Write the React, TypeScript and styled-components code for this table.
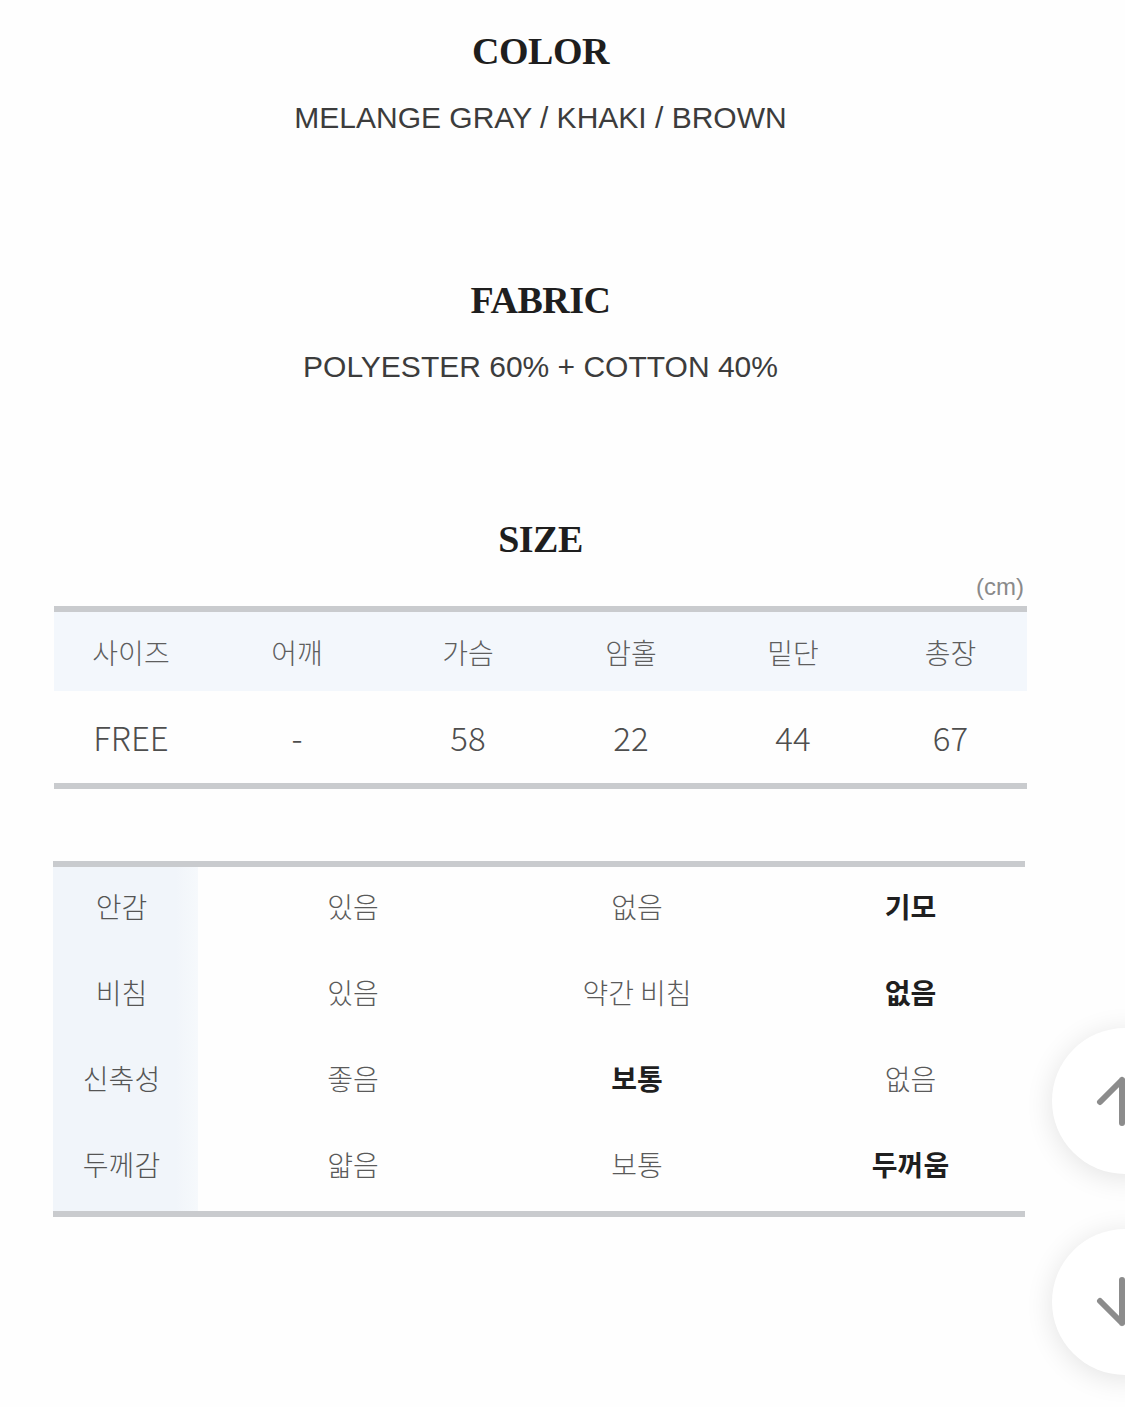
import React from 'react';
import styled, { createGlobalStyle } from 'styled-components';

const GlobalStyle = createGlobalStyle`
    html, body {
        margin: 0;
        padding: 0;
        background: #fefefe;
    }
    body {
        width: 1125px;
        height: 1407px;
        overflow: hidden;
    }
`;

const Page = styled.div`
    position: relative;
    width: 1125px;
    height: 1407px;
    padding: 29px 0 0 54px;
    box-sizing: border-box;
    overflow: hidden;
`;

const Content = styled.div`
    width: 973px;
    display: flex;
    flex-direction: column;
`;

const Title = styled.h2<{ $gap?: number }>`
    margin: ${(p) => p.$gap || 0}px 0 0;
    font-family: 'Liberation Serif', serif;
    font-weight: 700;
    font-size: 38px;
    line-height: 44px;
    letter-spacing: -0.5px;
    color: #1e1e1e;
    text-align: center;
`;

const Detail = styled.div`
    margin-top: 27px;
    font-family: 'Liberation Sans', sans-serif;
    font-size: 30px;
    line-height: 36px;
    color: #3c3c3c;
    text-align: center;
`;

const Unit = styled.div`
    margin-top: 12px;
    padding-right: 3px;
    font-family: 'Liberation Sans', sans-serif;
    font-size: 24px;
    line-height: 28px;
    color: #8a8a8a;
    text-align: right;
`;

const SizeTable = styled.div`
    margin-top: 5px;
    border-top: 6px solid #c9cbce;
    border-bottom: 6px solid #c9cbce;
`;

const SizeRow = styled.div<{ $head?: boolean }>`
    display: grid;
    grid-template-columns: 154px 178px 164px 162px 162px 1fr;
    align-items: center;
    height: ${(p) => (p.$head ? 79 : 92)}px;
    background: ${(p) => (p.$head ? '#f3f7fc' : 'transparent')};
`;

const SizeCell = styled.div<{ $head?: boolean }>`
    text-align: center;
    font-family: 'Noto Sans CJK KR', 'Liberation Sans', sans-serif;
    font-size: ${(p) => (p.$head ? 28 : 33)}px;
    font-weight: 300;
    line-height: 1;
    color: ${(p) => (p.$head ? '#5e5e5e' : '#4e4e4e')};
`;

const FeelTable = styled.div`
    margin-top: 72px;
    width: 972px;
    margin-left: -1px;
    border-top: 6px solid #c9cbce;
    border-bottom: 6px solid #c9cbce;
    display: grid;
    grid-template-columns: 145px 310px 258px 1fr;
    grid-auto-rows: 86px;
`;

const FeelLabel = styled.div`
    display: flex;
    align-items: center;
    justify-content: center;
    padding: 0 8px 9px 0;
    background: linear-gradient(to right, #f1f5fa 85%, #f6f9fc);
    font-family: 'Noto Sans CJK KR', sans-serif;
    font-size: 28px;
    font-weight: 300;
    color: #555;
`;

const FeelValue = styled.div<{ $strong?: boolean }>`
    display: flex;
    align-items: center;
    justify-content: center;
    padding-bottom: 9px;
    font-family: 'Noto Sans CJK KR', sans-serif;
    font-size: 28px;
    font-weight: ${(p) => (p.$strong ? 700 : 300)};
    color: ${(p) => (p.$strong ? '#1f1f1f' : '#5a5a5a')};

    &:nth-child(4n) {
        padding-left: 30px;
    }
`;

const FloatButton = styled.div<{ $top: number }>`
    position: absolute;
    left: 1052px;
    top: ${(p) => p.$top}px;
    width: 146px;
    height: 146px;
    border-radius: 50%;
    background: #fff;
    box-shadow: 0 4px 28px rgba(0, 0, 0, 0.11);
    display: flex;
    align-items: center;
    justify-content: center;
`;

const sizeHead = ['사이즈', '어깨', '가슴', '암홀', '밑단', '총장'];
const sizeData = ['FREE', '-', '58', '22', '44', '67'];

const feelRows: { label: string; values: string[]; strong: number }[] = [
    { label: '안감', values: ['있음', '없음', '기모'], strong: 2 },
    { label: '비침', values: ['있음', '약간 비침', '없음'], strong: 2 },
    { label: '신축성', values: ['좋음', '보통', '없음'], strong: 1 },
    { label: '두께감', values: ['얇음', '보통', '두꺼움'], strong: 2 },
];

const Arrow = ({ down }: { down?: boolean }) => (
    <svg width="60" height="60" viewBox="0 0 60 60" fill="none"
        style={{ transform: down ? 'rotate(180deg)' : undefined, marginLeft: -6 }}>
        <path d="M30 9 V52 M8 31 L30 9 L52 31" stroke="#8c8c8c" strokeWidth="6"
            strokeLinecap="round" strokeLinejoin="round" />
    </svg>
);

const App = () => {
    return (
        <Page>
            <GlobalStyle />
            <Content>
                <Title>COLOR</Title>
                <Detail>MELANGE GRAY / KHAKI / BROWN</Detail>

                <Title $gap={142}>FABRIC</Title>
                <Detail>POLYESTER 60% + COTTON 40%</Detail>

                <Title $gap={132}>SIZE</Title>
                <Unit>(cm)</Unit>
                <SizeTable>
                    <SizeRow $head>
                        {sizeHead.map((h) => <SizeCell $head key={h}>{h}</SizeCell>)}
                    </SizeRow>
                    <SizeRow>
                        {sizeData.map((d, i) => <SizeCell key={i}>{d}</SizeCell>)}
                    </SizeRow>
                </SizeTable>

                <FeelTable>
                    {feelRows.map((row) => (
                        <React.Fragment key={row.label}>
                            <FeelLabel>{row.label}</FeelLabel>
                            {row.values.map((v, i) => (
                                <FeelValue key={i} $strong={i === row.strong}>{v}</FeelValue>
                            ))}
                        </React.Fragment>
                    ))}
                </FeelTable>
            </Content>

            <FloatButton $top={1028}>
                <Arrow />
            </FloatButton>
            <FloatButton $top={1229}>
                <Arrow down />
            </FloatButton>
        </Page>
    );
};

export default App;
